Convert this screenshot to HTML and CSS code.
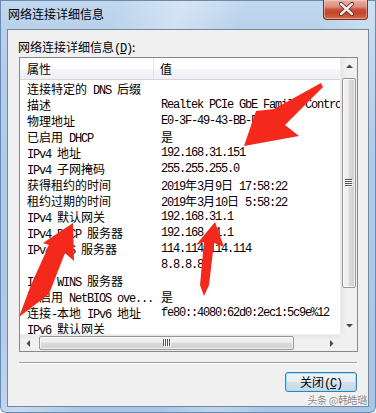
FILE: index.html
```html
<!DOCTYPE html>
<html>
<head>
<meta charset="utf-8">
<title>网络连接详细信息</title>
<link rel="stylesheet" href="styles.css">
</head>
<body>
<div class="window">
  <div class="titlebar">
    <span class="title">网络连接详细信息</span>
    <div class="close">
      <svg width="45" height="20" viewBox="0 0 45 20">
        <path d="M18 5 L29 15 M29 5 L18 15" stroke="#5b2a22" stroke-width="4.2" stroke-linecap="round" fill="none"/>
        <path d="M18 5 L29 15 M29 5 L18 15" stroke="#f4eeee" stroke-width="2.4" stroke-linecap="round" fill="none"/>
      </svg>
    </div>
  </div>
  <div class="client">
    <div class="label">网络连接详细信息<span class="acc">(<u>D</u>)</span>:</div>
    <div class="listbox">
      <div class="listview">
        <div class="header">
          <div class="hk">属性</div>
          <div class="hv">值</div>
        </div>
        <div class="rows">
          <div class="row"><div class="k"><span class="c">连接特定的</span> DNS <span class="c">后缀</span></div><div class="v"></div></div>
          <div class="row"><div class="k"><span class="c">描述</span></div><div class="v">Realtek PCIe GbE Family Controller</div></div>
          <div class="row"><div class="k"><span class="c">物理地址</span></div><div class="v">E0-3F-49-43-BB-FE</div></div>
          <div class="row"><div class="k"><span class="c">已启用</span> DHCP</div><div class="v"><span class="c">是</span></div></div>
          <div class="row"><div class="k">IPv4 <span class="c">地址</span></div><div class="v">192.168.31.151</div></div>
          <div class="row"><div class="k">IPv4 <span class="c">子网掩码</span></div><div class="v">255.255.255.0</div></div>
          <div class="row"><div class="k"><span class="c">获得租约的时间</span></div><div class="v">2019<span class="c">年</span>3<span class="c">月</span>9<span class="c">日</span> 17:58:22</div></div>
          <div class="row"><div class="k"><span class="c">租约过期的时间</span></div><div class="v">2019<span class="c">年</span>3<span class="c">月</span>10<span class="c">日</span> 5:58:22</div></div>
          <div class="row"><div class="k">IPv4 <span class="c">默认网关</span></div><div class="v">192.168.31.1</div></div>
          <div class="row"><div class="k">IPv4 DHCP <span class="c">服务器</span></div><div class="v">192.168.31.1</div></div>
          <div class="row"><div class="k">IPv4 DNS <span class="c">服务器</span></div><div class="v">114.114.114.114</div></div>
          <div class="row"><div class="k"></div><div class="v">8.8.8.8</div></div>
          <div class="row"><div class="k">IPv4 WINS <span class="c">服务器</span></div><div class="v"></div></div>
          <div class="row"><div class="k"><span class="c">已启用</span> NetBIOS ove...</div><div class="v"><span class="c">是</span></div></div>
          <div class="row"><div class="k"><span class="c">连接</span>-<span class="c">本地</span> IPv6 <span class="c">地址</span></div><div class="v">fe80::4080:62d0:2ec1:5c9e%12</div></div>
          <div class="row"><div class="k">IPv6 <span class="c">默认网关</span></div><div class="v"></div></div>
        </div>
      </div>
      <div class="vscroll">
        <div class="sbtn"><svg width="17" height="17" viewBox="0 0 17 17"><path d="M5 10 L8.5 6.5 L12 10 Z" fill="#4a4a4a"/></svg></div>
        <div class="vtrack">
          <div class="vthumb">
            <svg width="8" height="8" viewBox="0 0 8 8">
              <path d="M0 0.5H7M0 2.5H7M0 4.5H7M0 6.5H7" stroke="#555" stroke-width="1"/>
              <path d="M1 1.5H8M1 3.5H8M1 5.5H8M1 7.5H8" stroke="#fff" stroke-width="1"/>
            </svg>
          </div>
        </div>
        <div class="sbtn"><svg width="17" height="17" viewBox="0 0 17 17"><path d="M5 7 L8.5 10.5 L12 7 Z" fill="#4a4a4a"/></svg></div>
      </div>
      <div class="hscroll">
        <div class="sbtn"><svg width="17" height="17" viewBox="0 0 17 17"><path d="M10 5 L6.5 8.5 L10 12 Z" fill="#4a4a4a"/></svg></div>
        <div class="htrack">
          <div class="hthumb">
            <svg width="8" height="8" viewBox="0 0 8 8">
              <path d="M0.5 0V7M2.5 0V7M4.5 0V7M6.5 0V7" stroke="#555" stroke-width="1"/>
              <path d="M1.5 1V8M3.5 1V8M5.5 1V8M7.5 1V8" stroke="#fff" stroke-width="1"/>
            </svg>
          </div>
        </div>
        <div class="sbtn"><svg width="17" height="17" viewBox="0 0 17 17"><path d="M7 5 L10.5 8.5 L7 12 Z" fill="#4a4a4a"/></svg></div>
      </div>
      <div class="corner"></div>
    </div>
    <div class="sep"></div>
    <div class="buttons">
      <button class="btn">关闭<span class="acc">(<u>C</u>)</span></button>
    </div>
  </div>
  <div class="watermark">头条 @韩皓璐</div>
  <svg class="arrows" width="376" height="413" viewBox="0 0 376 413">
    <polygon points="321,83 274,109 256,111 244,146 299,136 285,125 323,87" fill="#f5281c"/>
    <polygon points="73,223 74,261 65,253 49,294 19,317 31,285 49,245 43,243" fill="#f5281c"/>
    <polygon points="215,222 224,247 214,243 209,285 204,296 200,285 204,242 196,245" fill="#f5281c"/>
  </svg>
</div>
</body>
</html>
```
FILE: styles.css
```css
* {
  box-sizing: border-box;
  margin: 0;
  padding: 0;
}

html, body {
  width: 376px;
  height: 413px;
  overflow: hidden;
  background: #ffffff;
}

body {
  font-family: "Noto Sans CJK SC", "Liberation Sans", sans-serif;
  font-size: 12px;
  color: #000;
}

.window {
  position: relative;
  width: 376px;
  height: 413px;
  padding: 0 7px 6px 7px;
  display: flex;
  flex-direction: column;
  border-radius: 0 0 6px 6px;
  background:
    linear-gradient(112deg, rgba(255,255,255,0) 22%, rgba(255,255,255,0.35) 34%, rgba(255,255,255,0) 46%, rgba(255,255,255,0) 60%, rgba(255,255,255,0.25) 70%, rgba(255,255,255,0) 80%),
    linear-gradient(180deg, #c2d8ef 0%, #b7d0eb 8%, #aecbe9 40%, #a9c6e6 100%);
  box-shadow: inset 0 0 0 1px #6a8bb1;
}

.titlebar {
  height: 29px;
  display: flex;
  justify-content: space-between;
  align-items: flex-start;
}

.title {
  margin-top: 6px;
  margin-left: 1px;
  line-height: 16px;
  color: #000;
}

.close {
  width: 45px;
  height: 20px;
  margin-right: 1px;
  border: 1px solid #6e3329;
  border-top: none;
  border-radius: 0 0 4px 4px;
  background: linear-gradient(180deg, #eab1a4 0%, #de907e 35%, #c9503a 50%, #c44429 70%, #d96a45 100%);
  box-shadow: inset 0 0 0 1px rgba(255,220,210,0.45);
  overflow: hidden;
}

.close svg {
  display: block;
  margin: -1px 0 0 -1px;
}

.client {
  height: 378px;
  border: 1px solid #74879c;
  background: #f0f0f0;
  display: flex;
  flex-direction: column;
}

.label {
  margin: 9px 0 0 10px;
  height: 16px;
  line-height: 16px;
}

.acc {
  font-family: "Liberation Mono", monospace;
  font-size: 12px;
  letter-spacing: -1.2px;
}

.listbox {
  margin: 2px 0 0 11px;
  width: 339px;
  height: 295px;
  border: 1px solid #828790;
  background: #fff;
  display: grid;
  grid-template-columns: 320px 17px;
  grid-template-rows: 276px 17px;
}

.listview {
  overflow: hidden;
  background: #fff;
}

.header {
  height: 22px;
  display: flex;
  line-height: 22px;
  background: linear-gradient(180deg, #ffffff 0%, #ffffff 50%, #f5f6f8 52%, #eef0f3 100%);
  border-bottom: 1px solid #d5d5d5;
}

.hk {
  width: 134px;
  padding-left: 7px;
  border-right: 1px solid #e3e5e8;
  flex: none;
}

.hv {
  padding-left: 6px;
  flex: 1;
}

.rows {
  padding-top: 1px;
}

.row {
  display: flex;
  height: 16px;
  line-height: 16px;
  white-space: nowrap;
  font-family: "Liberation Mono", monospace;
  font-size: 12px;
  letter-spacing: -1.2px;
}

.k {
  width: 134px;
  padding-left: 7px;
  flex: none;
  overflow: hidden;
}

.v {
  padding-left: 7px;
  flex: none;
}

.c {
  font-family: "Noto Sans CJK SC", sans-serif;
  font-size: 12px;
  letter-spacing: 0;
}

.vscroll {
  display: flex;
  flex-direction: column;
  background: linear-gradient(90deg, #e6e6e6 0%, #f0f0f0 30%, #f0f0f0 100%);
  border-left: 1px solid #ececec;
}

.sbtn {
  width: 17px;
  height: 17px;
  flex: none;
}

.sbtn svg {
  display: block;
}

.vscroll .sbtn {
  width: 16px;
}

.vtrack {
  flex: 1;
  padding: 3px 1px 0 1px;
}

.vthumb {
  height: 210px;
  border: 1px solid #979797;
  border-radius: 2px;
  background: linear-gradient(90deg, #f5f5f5 0%, #ebebeb 45%, #dbdbdb 50%, #d0d0d0 100%);
  box-shadow: inset 0 0 0 1px rgba(255,255,255,0.7);
  display: flex;
  align-items: center;
  justify-content: center;
}

.vthumb svg, .hthumb svg {
  display: block;
}

.hscroll {
  display: flex;
  background: linear-gradient(180deg, #e6e6e6 0%, #f0f0f0 30%, #f0f0f0 100%);
  border-top: 1px solid #ececec;
}

.htrack {
  flex: 1;
  padding: 1px 0 1px 2px;
}

.hthumb {
  width: 255px;
  height: 14px;
  border: 1px solid #979797;
  border-radius: 2px;
  background: linear-gradient(180deg, #f5f5f5 0%, #ebebeb 45%, #dbdbdb 50%, #d0d0d0 100%);
  box-shadow: inset 0 0 0 1px rgba(255,255,255,0.7);
  display: flex;
  align-items: center;
  justify-content: center;
}

.corner {
  background: #f0f0f0;
}

.sep {
  margin: 10px 0 0 11px;
  width: 338px;
  height: 2px;
  border-top: 1px solid #a0a0a0;
  border-bottom: 1px solid #ffffff;
}

.buttons {
  margin-top: 8px;
  display: flex;
}

.btn {
  margin-left: 277px;
  width: 72px;
  height: 20px;
  border: 1px solid #3c7fb1;
  border-radius: 3px;
  background: linear-gradient(180deg, #eef4f8 0%, #e6eef4 48%, #d3e2ec 50%, #c6d9e6 100%);
  box-shadow: inset 0 0 0 1px #9ee0f9;
  font-family: "Noto Sans CJK SC", sans-serif;
  font-size: 12px;
  line-height: 18px;
  color: #000;
  padding: 0;
}

.watermark {
  position: absolute;
  right: 9px;
  bottom: 7px;
  font-size: 10px;
  line-height: 12px;
  letter-spacing: -0.3px;
  color: #8a8a8a;
  text-shadow: 0 0 2px #fff, 0 0 1px #fff;
}

.arrows {
  position: absolute;
  left: 0;
  top: 0;
  pointer-events: none;
}
```
